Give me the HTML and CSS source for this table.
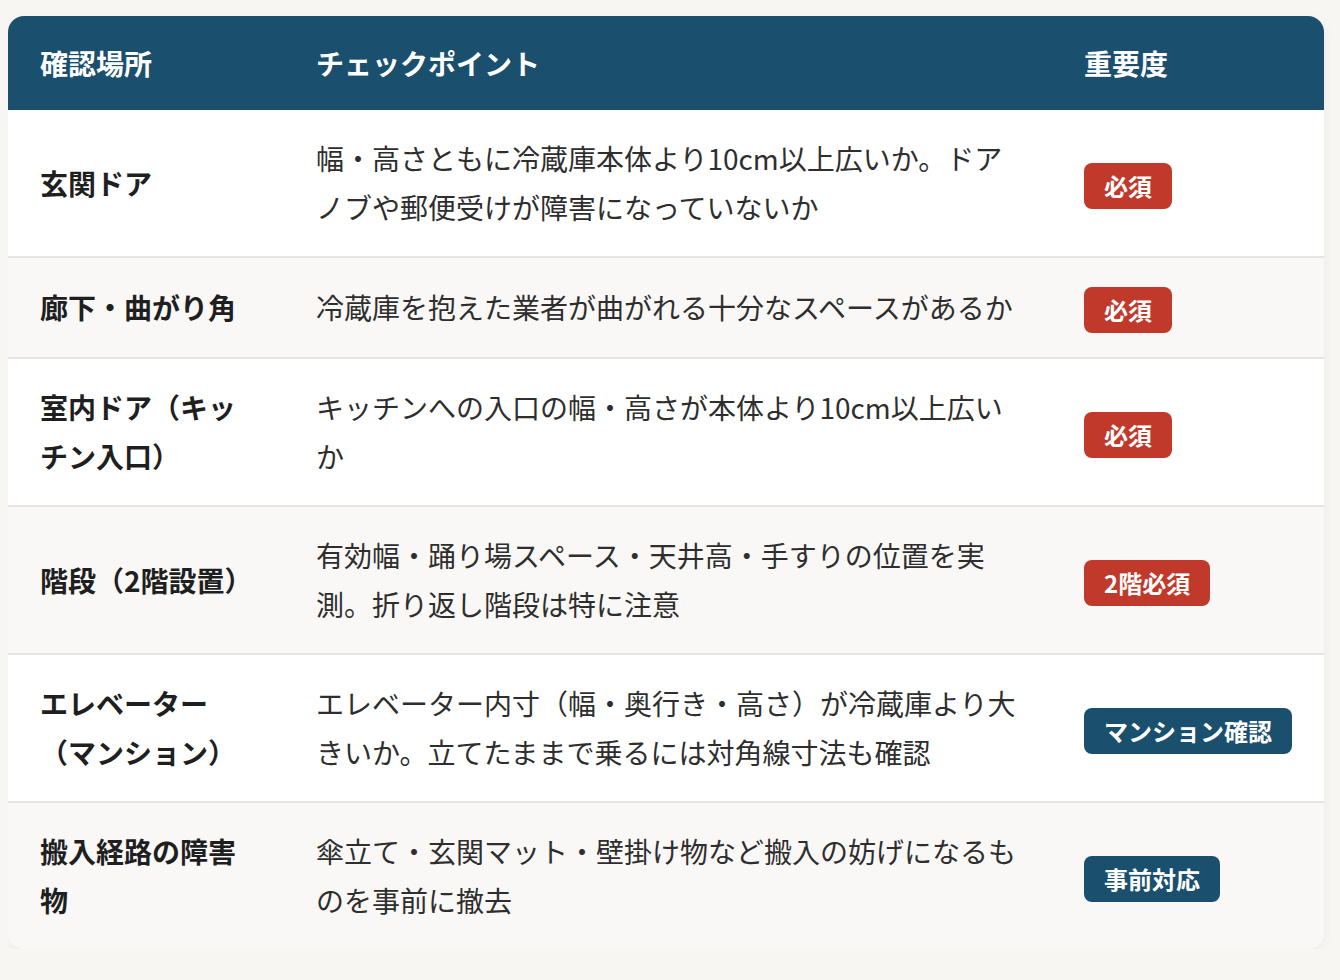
FILE: index.html
```html
<!DOCTYPE html>
<html lang="ja">
<head>
<meta charset="utf-8">
<link rel="stylesheet" href="styles.css">
</head>
<body>
<div class="card">
  <table class="check">
    <colgroup>
      <col class="c1"><col class="c2"><col class="c3">
    </colgroup>
    <thead>
      <tr><th>確認場所</th><th>チェックポイント</th><th>重要度</th></tr>
    </thead>
    <tbody>
      <tr>
        <td class="place">玄関ドア</td>
        <td>幅・高さともに冷蔵庫本体より10cm以上広いか。ドアノブや郵便受けが障害になっていないか</td>
        <td><span class="badge red">必須</span></td>
      </tr>
      <tr>
        <td class="place">廊下・曲がり角</td>
        <td>冷蔵庫を抱えた業者が曲がれる十分なスペースがあるか</td>
        <td><span class="badge red">必須</span></td>
      </tr>
      <tr>
        <td class="place">室内ドア（キッチン入口）</td>
        <td>キッチンへの入口の幅・高さが本体より10cm以上広いか</td>
        <td><span class="badge red">必須</span></td>
      </tr>
      <tr>
        <td class="place">階段（2階設置）</td>
        <td>有効幅・踊り場スペース・天井高・手すりの位置を実測。折り返し階段は特に注意</td>
        <td><span class="badge red">2階必須</span></td>
      </tr>
      <tr>
        <td class="place">エレベーター（マンション）</td>
        <td>エレベーター内寸（幅・奥行き・高さ）が冷蔵庫より大きいか。立てたままで乗るには対角線寸法も確認</td>
        <td><span class="badge blue">マンション確認</span></td>
      </tr>
      <tr>
        <td class="place">搬入経路の障害物</td>
        <td>傘立て・玄関マット・壁掛け物など搬入の妨げになるものを事前に撤去</td>
        <td><span class="badge blue">事前対応</span></td>
      </tr>
    </tbody>
  </table>
</div>
</body>
</html>
```

FILE: styles.css
```css
html, body {
  background: #f7f6f3;
}
body {
  margin: 8px;
  padding-top: 8px;
  font-family: "Noto Sans CJK JP", "Noto Sans", sans-serif;
  color: #333;
}
.card {
  margin-right: 8px;
  border-radius: 16px;
  overflow: hidden;
  background: #fff;
  box-shadow: 0 4px 14px rgba(0, 0, 0, 0.05);
}
.check {
  width: 100%;
  table-layout: fixed;
  border-collapse: separate;
  border-spacing: 0;
  font-size: 28px;
  line-height: 1.75;
}
.c1 { width: 276px; }
.c2 { width: 768px; }
.c3 { width: 272px; }
.check th {
  background: #1b4f6e;
  color: #fff;
  text-align: left;
  font-weight: 700;
  padding: 23px 32px;
  line-height: 48px;
  font-size: 28px;
}
.check td {
  padding: 24px 32px;
  vertical-align: middle;
  border-top: 2px solid #e6e5e2;
  color: #2e2e2e;
}
.check tbody tr:first-child td {
  border-top: none;
}
.check tbody tr:nth-child(odd) td {
  background: #ffffff;
}
.check tbody tr:nth-child(even) td {
  background: #f9f8f6;
}
.check td.place {
  font-weight: 700;
  color: #1f1f1f;
}
.badge {
  display: inline-block;
  font-size: 24px;
  font-weight: 700;
  line-height: 30px;
  padding: 8px 20px;
  border-radius: 8px;
  color: #fff;
  vertical-align: middle;
}
.badge.red { background: #c0392b; }
.badge.blue { background: #1b4f6e; }
```
